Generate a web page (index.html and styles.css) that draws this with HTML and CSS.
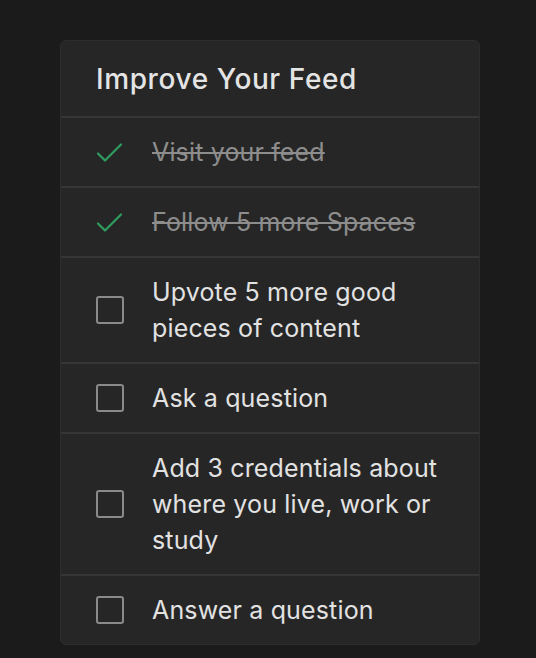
FILE: index.html
```html
<!DOCTYPE html>
<html>
<head>
<meta charset="utf-8">
<link rel="stylesheet" href="styles.css">
</head>
<body>
<div class="card">
  <div class="header"><h2 class="title">Improve Your Feed</h2></div>
  <div class="row done">
    <span class="icon"><svg width="28" height="28" viewBox="0 0 28 28"><path d="M2 15.5 L9 22.5 L25 6.5" fill="none" stroke="#2e9d5f" stroke-width="2.2" stroke-linecap="round" stroke-linejoin="round"/></svg></span>
    <span class="label">Visit your feed</span>
  </div>
  <div class="row done">
    <span class="icon"><svg width="28" height="28" viewBox="0 0 28 28"><path d="M2 15.5 L9 22.5 L25 6.5" fill="none" stroke="#2e9d5f" stroke-width="2.2" stroke-linecap="round" stroke-linejoin="round"/></svg></span>
    <span class="label">Follow 5 more Spaces</span>
  </div>
  <div class="row">
    <span class="icon"><span class="box"></span></span>
    <span class="label">Upvote 5 more good pieces of content</span>
  </div>
  <div class="row">
    <span class="icon"><span class="box"></span></span>
    <span class="label">Ask a question</span>
  </div>
  <div class="row">
    <span class="icon"><span class="box"></span></span>
    <span class="label">Add 3 credentials about where you live, work or study</span>
  </div>
  <div class="row">
    <span class="icon"><span class="box"></span></span>
    <span class="label">Answer a question</span>
  </div>
</div>
</body>
</html>
```
FILE: styles.css
```css
html, body {
  margin: 0;
  padding: 0;
  background: #1b1b1b;
}
body {
  font-family: Inter, "Noto Sans", sans-serif;
  color: #e2e2e2;
}
.card {
  margin: 40px 0 0 60px;
  width: 418px;
  background: #262626;
  border: 1px solid #2d2d2d;
  border-radius: 6px;
  overflow: hidden;
}
.header {
  height: 75px;
  display: flex;
  align-items: center;
  padding-left: 35px;
}
.title {
  margin: 0;
  font-size: 28px;
  font-weight: 500;
  color: #e4e4e4;
  letter-spacing: 0.6px;
}
.row {
  border-top: 2px solid #363636;
  display: flex;
  align-items: center;
  padding: 16px 24px 16px 35px;
  gap: 28px;
}
.icon {
  flex: 0 0 28px;
  width: 28px;
  height: 28px;
  display: flex;
  align-items: center;
  justify-content: center;
}
.box {
  border: 2px solid #8a8a8a;
  border-radius: 3px;
  box-sizing: border-box;
  width: 28px;
  height: 28px;
}
.label {
  font-size: 25px;
  line-height: 36px;
  letter-spacing: 0.15px;
  color: #e2e2e2;
}
.done .label {
  color: #8d8d8d;
  text-decoration: line-through;
  text-decoration-thickness: 2px;
}
```
